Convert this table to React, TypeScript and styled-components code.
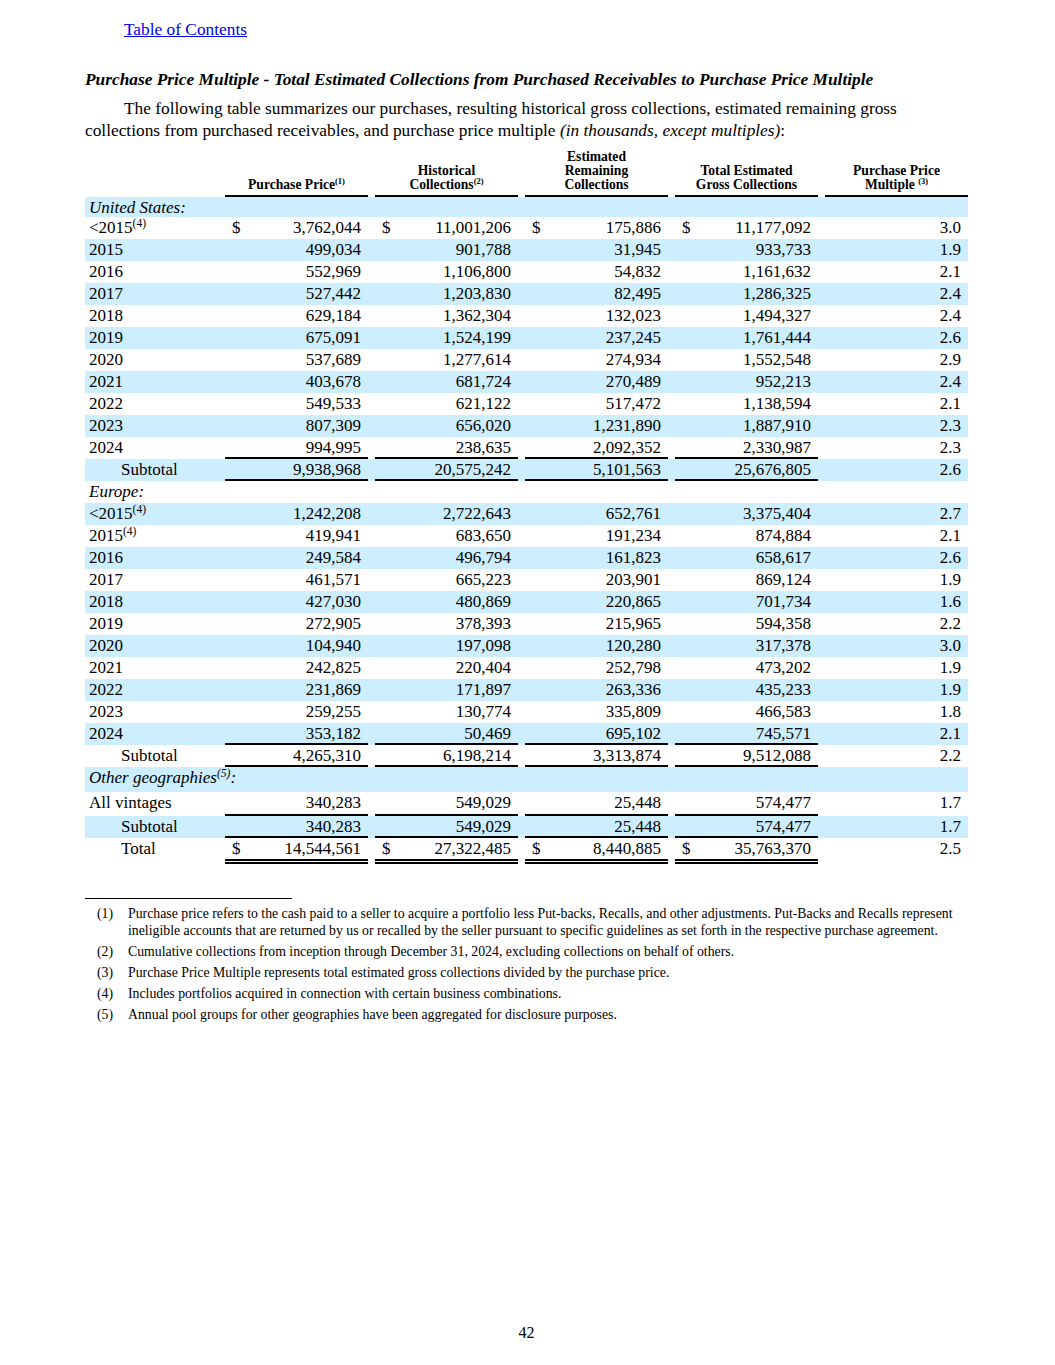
import React from "react";
import styled, { createGlobalStyle } from "styled-components";

const GlobalStyle = createGlobalStyle`
  html, body { margin: 0; padding: 0; background: #fff; }
  body { font-family: "Liberation Serif", "Times New Roman", serif; color: #000; }
`;

const Page = styled.div`
  width: 1055px;
  height: 1365px;
  box-sizing: border-box;
  padding: 20px 87px 0 85px;
  display: flex;
  flex-direction: column;
`;

const TocLink = styled.a`
  margin-left: 39px;
  font-size: 17.33px;
  line-height: 20px;
  color: #0000ee;
  text-decoration: underline;
  align-self: flex-start;
`;

const Title = styled.div`
  margin-top: 30px;
  font-size: 17.33px;
  line-height: 20px;
  font-weight: bold;
  font-style: italic;
`;

const Para = styled.p`
  margin: 8px 0 0;
  font-size: 17.33px;
  line-height: 22px;
  text-indent: 39px;
`;

const Grid = styled.div<{ $bg?: boolean; $h?: number }>`
  display: grid;
  grid-template-columns: 133px repeat(5, 143px);
  column-gap: 7px;
  background: ${(p) => (p.$bg ? "#cceeff" : "transparent")};
  height: ${(p) => (p.$h ? `${p.$h}px` : "22px")};
  font-size: 17px;
  line-height: 22px;
`;

const HeadRow = styled.div`
  display: grid;
  grid-template-columns: 133px repeat(5, 143px);
  column-gap: 7px;
  align-items: end;
  margin-top: 8px;
`;

const HeadCell = styled.div`
  text-align: center;
  font-weight: bold;
  font-size: 13.6px;
  line-height: 14px;
  padding-bottom: 3px;
  border-bottom: 2px solid #000;
  white-space: nowrap;
`;

const Label = styled.div<{ $indent?: boolean; $italic?: boolean }>`
  display: block;
  padding-left: ${(p) => (p.$indent ? "36px" : "4px")};
  font-style: ${(p) => (p.$italic ? "italic" : "normal")};
  white-space: nowrap;
  height: 22px;
  line-height: 22px;
`;

type Rule = "single" | "double" | undefined;

const Num = styled.div<{ $rule?: Rule }>`
  display: flex;
  justify-content: space-between;
  align-items: flex-start;
  padding: 0 7px;
  white-space: nowrap;
  box-shadow: ${(p) =>
    p.$rule === "single"
      ? "inset 0 -2px 0 #000"
      : p.$rule === "double"
      ? "inset 0 -2px 0 #000, inset 0 -3px 0 #fff, inset 0 -5px 0 #000"
      : "none"};
`;

const Dollar = styled.span``;

const Sup = styled.sup`
  font-size: 11.5px;
  line-height: 0;
  vertical-align: 6px;
`;

const HSup = styled.sup`
  font-size: 8.5px;
  line-height: 0;
  vertical-align: 5px;
`;

const Footnotes = styled.div`
  margin-top: 34px;
`;

const FootRule = styled.div`
  width: 207px;
  height: 1px;
  background: #000;
  margin-bottom: 6px;
`;

const Note = styled.div`
  display: grid;
  grid-template-columns: 31px 1fr;
  padding-left: 12px;
  font-size: 13.8px;
  line-height: 17px;
  margin-bottom: 4px;
`;

const PageNum = styled.div`
  margin-top: auto;
  margin-bottom: 22px;
  text-align: center;
  font-size: 16px;
  line-height: 20px;
`;

type Row = {
  label: React.ReactNode;
  vals?: string[];
  dollar?: boolean;
  indent?: boolean;
  italic?: boolean;
  rule?: Rule;
  h?: number;
};

const mk = (label: React.ReactNode, v: string, extra: Partial<Row> = {}): Row => ({
  label,
  vals: v.split(" "),
  ...extra,
});

const rows: Row[] = [
  { label: "United States:", italic: true, h: 20 },
  mk(<>&lt;2015<Sup>(4)</Sup></>, "3,762,044 11,001,206 175,886 11,177,092 3.0", { dollar: true }),
  mk("2015", "499,034 901,788 31,945 933,733 1.9"),
  mk("2016", "552,969 1,106,800 54,832 1,161,632 2.1"),
  mk("2017", "527,442 1,203,830 82,495 1,286,325 2.4"),
  mk("2018", "629,184 1,362,304 132,023 1,494,327 2.4"),
  mk("2019", "675,091 1,524,199 237,245 1,761,444 2.6"),
  mk("2020", "537,689 1,277,614 274,934 1,552,548 2.9"),
  mk("2021", "403,678 681,724 270,489 952,213 2.4"),
  mk("2022", "549,533 621,122 517,472 1,138,594 2.1"),
  mk("2023", "807,309 656,020 1,231,890 1,887,910 2.3"),
  mk("2024", "994,995 238,635 2,092,352 2,330,987 2.3", { rule: "single" }),
  mk("Subtotal", "9,938,968 20,575,242 5,101,563 25,676,805 2.6", { indent: true, rule: "single" }),
  { label: "Europe:", italic: true },
  mk(<>&lt;2015<Sup>(4)</Sup></>, "1,242,208 2,722,643 652,761 3,375,404 2.7"),
  mk(<>2015<Sup>(4)</Sup></>, "419,941 683,650 191,234 874,884 2.1"),
  mk("2016", "249,584 496,794 161,823 658,617 2.6"),
  mk("2017", "461,571 665,223 203,901 869,124 1.9"),
  mk("2018", "427,030 480,869 220,865 701,734 1.6"),
  mk("2019", "272,905 378,393 215,965 594,358 2.2"),
  mk("2020", "104,940 197,098 120,280 317,378 3.0"),
  mk("2021", "242,825 220,404 252,798 473,202 1.9"),
  mk("2022", "231,869 171,897 263,336 435,233 1.9"),
  mk("2023", "259,255 130,774 335,809 466,583 1.8"),
  mk("2024", "353,182 50,469 695,102 745,571 2.1", { rule: "single" }),
  mk("Subtotal", "4,265,310 6,198,214 3,313,874 9,512,088 2.2", { indent: true, rule: "single" }),
  { label: <>Other geographies<Sup>(5)</Sup>:</>, italic: true, h: 25 },
  mk("All vintages", "340,283 549,029 25,448 574,477 1.7", { rule: "single", h: 24 }),
  mk("Subtotal", "340,283 549,029 25,448 574,477 1.7", { indent: true, rule: "single" }),
  mk("Total", "14,544,561 27,322,485 8,440,885 35,763,370 2.5", { indent: true, dollar: true, rule: "double", h: 26 }),
];

const notes: [string, string][] = [
  [
    "(1)",
    "Purchase price refers to the cash paid to a seller to acquire a portfolio less Put-backs, Recalls, and other adjustments. Put-Backs and Recalls represent ineligible accounts that are returned by us or recalled by the seller pursuant to specific guidelines as set forth in the respective purchase agreement.",
  ],
  ["(2)", "Cumulative collections from inception through December 31, 2024, excluding collections on behalf of others."],
  ["(3)", "Purchase Price Multiple represents total estimated gross collections divided by the purchase price."],
  ["(4)", "Includes portfolios acquired in connection with certain business combinations."],
  ["(5)", "Annual pool groups for other geographies have been aggregated for disclosure purposes."],
];

export default function App() {
  return (
    <>
      <GlobalStyle />
      <Page>
        <TocLink href="#">Table of Contents</TocLink>
        <Title>
          Purchase Price Multiple - Total Estimated Collections from Purchased Receivables to Purchase Price Multiple
        </Title>
        <Para>
          The following table summarizes our purchases, resulting historical gross collections, estimated remaining gross
          collections from purchased receivables, and purchase price multiple <i>(in thousands, except multiples)</i>:
        </Para>
        <HeadRow>
          <div />
          <HeadCell>
            Purchase Price<HSup>(1)</HSup>
          </HeadCell>
          <HeadCell>
            Historical
            <br />
            Collections<HSup>(2)</HSup>
          </HeadCell>
          <HeadCell>
            Estimated
            <br />
            Remaining
            <br />
            Collections
          </HeadCell>
          <HeadCell>
            Total Estimated
            <br />
            Gross Collections
          </HeadCell>
          <HeadCell>
            Purchase Price
            <br />
            Multiple <HSup>(3)</HSup>
          </HeadCell>
        </HeadRow>
        {rows.map((r, i) => (
          <Grid key={i} $bg={i % 2 === 0} $h={r.h}>
            <Label $indent={r.indent} $italic={r.italic}>
              {r.label}
            </Label>
            {r.vals
              ? r.vals.map((v, j) => (
                  <Num key={j} $rule={j < 4 ? r.rule : undefined}>
                    <Dollar>{r.dollar && j < 4 ? "$" : ""}</Dollar>
                    <span>{v}</span>
                  </Num>
                ))
              : null}
          </Grid>
        ))}
        <Footnotes>
          <FootRule />
          {notes.map(([n, t]) => (
            <Note key={n}>
              <span>{n}</span>
              <span>{t}</span>
            </Note>
          ))}
        </Footnotes>
        <PageNum>42</PageNum>
      </Page>
    </>
  );
}
